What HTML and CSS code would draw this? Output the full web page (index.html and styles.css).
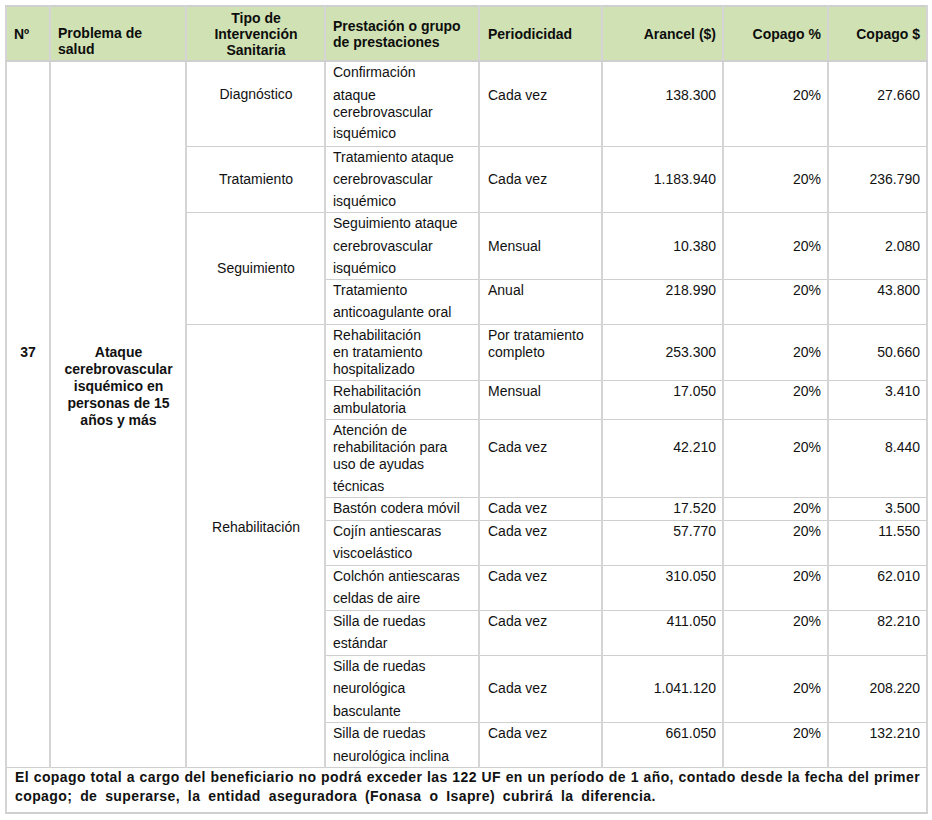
FILE: index.html
```html
<!DOCTYPE html>
<html lang="es">
<head>
<meta charset="utf-8">
<title>Ataque cerebrovascular isquémico</title>
<link rel="stylesheet" href="styles.css">
</head>
<body>
<div class="page">
<table class="ges">
  <colgroup>
    <col class="c-n"><col class="c-prob"><col class="c-tipo"><col class="c-prest"><col class="c-per"><col class="c-ar"><col class="c-cp"><col class="c-cd">
  </colgroup>
  <thead>
    <tr>
      <th class="left">Nº</th>
      <th class="left vb">Problema de<br>salud</th>
      <th class="center">Tipo de<br>Intervención<br>Sanitaria</th>
      <th class="left">Prestación o grupo<br>de prestaciones</th>
      <th class="left per-h">Periodicidad</th>
      <th class="right">Arancel ($)</th>
      <th class="right">Copago %</th>
      <th class="right">Copago $</th>
    </tr>
  </thead>
  <tbody>
    <tr>
      <td rowspan="13" class="num bold">37</td>
      <td rowspan="13" class="prob bold">Ataque<br>cerebrovascular<br>isquémico en<br>personas de 15<br>años y más</td>
      <td class="tipo o22">Diagnóstico</td>
      <td class="prest pb4"><span class="ln">Confirmación</span><span class="ln g6">ataque</span><span class="ln">cerebrovascular</span><span class="ln g4">isquémico</span></td>
      <td class="per o23">Cada vez</td>
      <td class="right o23">138.300</td>
      <td class="right o23">20%</td>
      <td class="right o23">27.660</td>
    </tr>
    <tr>
      <td class="tipo o22">Tratamiento</td>
      <td class="prest"><span class="ln">Tratamiento ataque</span><span class="ln g5">cerebrovascular</span><span class="ln g5">isquémico</span></td>
      <td class="per o22">Cada vez</td>
      <td class="right o22">1.183.940</td>
      <td class="right o22">20%</td>
      <td class="right o22">236.790</td>
    </tr>
    <tr>
      <td rowspan="2" class="tipo mid">Seguimiento</td>
      <td class="prest"><span class="ln">Seguimiento ataque</span><span class="ln g6">cerebrovascular</span><span class="ln g5">isquémico</span></td>
      <td class="per o23">Mensual</td>
      <td class="right o23">10.380</td>
      <td class="right o23">20%</td>
      <td class="right o23">2.080</td>
    </tr>
    <tr>
      <td class="prest pb3"><span class="ln">Tratamiento</span><span class="ln g5">anticoagulante oral</span></td>
      <td class="per">Anual</td>
      <td class="right">218.990</td>
      <td class="right">20%</td>
      <td class="right">43.800</td>
    </tr>
    <tr>
      <td rowspan="9" class="tipo mid rehab">Rehabilitación</td>
      <td class="prest"><span class="ln">Rehabilitación</span><span class="ln">en tratamiento</span><span class="ln">hospitalizado</span></td>
      <td class="per"><span class="ln">Por tratamiento</span><span class="ln">completo</span></td>
      <td class="right o17">253.300</td>
      <td class="right o17">20%</td>
      <td class="right o17">50.660</td>
    </tr>
    <tr>
      <td class="prest"><span class="ln">Rehabilitación</span><span class="ln">ambulatoria</span></td>
      <td class="per">Mensual</td>
      <td class="right">17.050</td>
      <td class="right">20%</td>
      <td class="right">3.410</td>
    </tr>
    <tr>
      <td class="prest"><span class="ln">Atención de</span><span class="ln">rehabilitación para</span><span class="ln">uso de ayudas</span><span class="ln g5">técnicas</span></td>
      <td class="per o17">Cada vez</td>
      <td class="right o17">42.210</td>
      <td class="right o17">20%</td>
      <td class="right o17">8.440</td>
    </tr>
    <tr>
      <td class="prest pb3"><span class="ln">Bastón codera móvil</span></td>
      <td class="per">Cada vez</td>
      <td class="right">17.520</td>
      <td class="right">20%</td>
      <td class="right">3.500</td>
    </tr>
    <tr>
      <td class="prest pb3"><span class="ln">Cojín antiescaras</span><span class="ln g5">viscoelástico</span></td>
      <td class="per">Cada vez</td>
      <td class="right">57.770</td>
      <td class="right">20%</td>
      <td class="right">11.550</td>
    </tr>
    <tr>
      <td class="prest pb3"><span class="ln">Colchón antiescaras</span><span class="ln g5">celdas de aire</span></td>
      <td class="per">Cada vez</td>
      <td class="right">310.050</td>
      <td class="right">20%</td>
      <td class="right">62.010</td>
    </tr>
    <tr>
      <td class="prest pb3"><span class="ln">Silla de ruedas</span><span class="ln g5">estándar</span></td>
      <td class="per">Cada vez</td>
      <td class="right">411.050</td>
      <td class="right">20%</td>
      <td class="right">82.210</td>
    </tr>
    <tr>
      <td class="prest"><span class="ln">Silla de ruedas</span><span class="ln g5">neurológica</span><span class="ln g6">basculante</span></td>
      <td class="per o22">Cada vez</td>
      <td class="right o22">1.041.120</td>
      <td class="right o22">20%</td>
      <td class="right o22">208.220</td>
    </tr>
    <tr>
      <td class="prest"><span class="ln">Silla de ruedas</span><span class="ln g6">neurológica inclina</span></td>
      <td class="per">Cada vez</td>
      <td class="right">661.050</td>
      <td class="right">20%</td>
      <td class="right">132.210</td>
    </tr>
  </tbody>
  <tfoot>
    <tr>
      <td colspan="8" class="note"><span class="l1">El copago total a cargo del beneficiario no podrá exceder las 122 UF en un período de 1 año, contado desde la fecha del primer</span><span class="l2">copago; de superarse, la entidad aseguradora (Fonasa o Isapre) cubrirá la diferencia.</span></td>
    </tr>
  </tfoot>
</table>
</div>
</body>
</html>
```
FILE: styles.css
```css
html, body {
  margin: 0;
  padding: 0;
  background: #ffffff;
}

.page {
  padding: 5px 6px 0 5px;
  font-family: "Liberation Sans", Arial, sans-serif;
  font-size: 14px;
  color: #111111;
}

.ges {
  border-collapse: collapse;
  table-layout: fixed;
  width: 921px;
}

.c-n { width: 44px; }
.c-prob { width: 136px; }
.c-tipo { width: 139px; }
.c-prest { width: 154px; }
.c-per { width: 123px; }
.c-ar { width: 121px; }
.c-cp { width: 105px; }
.c-cd { width: 99px; }

.ges th,
.ges td {
  border-top: 1px solid #cfcfcf;
  border-bottom: 1px solid #cfcfcf;
  border-left: 2px solid #d6d4d6;
  border-right: 2px solid #d6d4d6;
}

.ges th {
  background: #d0e2b3;
  font-weight: bold;
  line-height: 16px;
  padding: 3px 6px 2px 7px;
  vertical-align: middle;
  color: #0d0d0d;
  border-top-width: 2px;
  border-bottom-width: 2px;
}

.ges td {
  line-height: 17px;
  padding: 2px 6px 2px 7px;
  vertical-align: top;
}

.left { text-align: left; }
.center { text-align: center; }
.right { text-align: right; }
.ges th.vb {
  vertical-align: bottom;
  padding-bottom: 3px;
}
.ges th.per-h { padding-left: 8px; }

.bold { font-weight: bold; }

.ln { display: block; }
.g4 { margin-top: 4px; }
.g5 { margin-top: 5px; }
.g6 { margin-top: 6px; }

.ges td.o17 { padding-top: 19px; }
.ges td.o22 { padding-top: 24px; }
.ges td.o23 { padding-top: 25px; }
.ges td.pb4 { padding-bottom: 4px; }
.ges td.pb3 { padding-bottom: 3px; }

.ges td.num {
  padding-top: 282px;
  padding-left: 6px;
  text-align: center;
}

.ges td.prob {
  padding-top: 282px;
  text-align: center;
}

.tipo { text-align: center; }
.ges td.mid { vertical-align: middle; }
.ges td.rehab { padding-bottom: 40px; }

.ges td.per { padding-left: 8px; }

.ges td.note {
  font-weight: bold;
  line-height: 19px;
  padding: 0 6px 6px 8px;
  letter-spacing: 0.4px;
  border-left-width: 2px;
  border-right-width: 2px;
  border-bottom-width: 2px;
}

.note .l1 {
  display: block;
  text-align: justify;
  text-align-last: justify;
  white-space: nowrap;
}

.note .l2 {
  display: block;
  word-spacing: 3.6px;
}
```
